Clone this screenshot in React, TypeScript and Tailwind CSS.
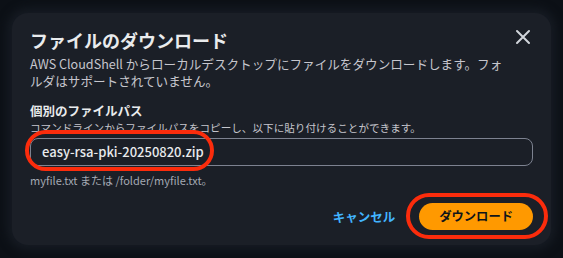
import React from "react";

export default function App() {
  const font = { fontFamily: '"Noto Sans CJK JP", "Noto Sans", sans-serif' };
  return (
    <div
      className="relative w-[563px] h-[258px] overflow-hidden bg-[#0c1016] pt-[13px] pl-[12px]"
      style={font}
    >
      <div className="relative w-[539px] h-[232px] rounded-[16px] bg-[#1b1f27] shadow-[0_0_10px_5px_#161b23] px-[18px] pt-[15px]">
        <div className="flex items-start justify-between">
          <h1 className="text-[18px] leading-[24px] font-bold text-[#e9ebed]">
            ファイルのダウンロード
          </h1>
          <button className="mt-[1px] mr-[2px] text-[#d1d5db]" aria-label="close">
            <svg width="16" height="16" viewBox="0 0 16 16" fill="none">
              <path d="M2 2 L14 14 M14 2 L2 14" stroke="currentColor" strokeWidth="2" strokeLinecap="round" />
            </svg>
          </button>
        </div>
        <p className="mt-[3px] w-[474px] text-[12.6px] leading-[17px] text-[#c6c6cd]">
          AWS CloudShell からローカルデスクトップにファイルをダウンロードします。フォルダはサポートされていません。
        </p>
        <div className="mt-[13px] text-[12.5px] leading-[17px] font-bold text-[#e9ebed]">
          個別のファイルパス
        </div>
        <div className="mt-[1px] text-[10.6px] leading-[15px] text-[#c6c6cd]">
          コマンドラインからファイルパスをコピーし、以下に貼り付けることができます。
        </div>
        <div className="mt-[3px] h-[28px] rounded-[8px] border border-[#7d8290] flex items-center pl-[11px] text-[13px] font-medium text-[#e9ebed]">
          easy-rsa-pki-20250820.zip
        </div>
        <div className="mt-[7px] text-[11px] leading-[14px] text-[#a4a9b3]">
          myfile.txt または /folder/myfile.txt。
        </div>
        <div className="mt-[16px] flex items-center justify-end gap-[24px]">
          <button className="text-[12.5px] leading-[17px] font-bold text-[#42b4ff]">
            キャンセル
          </button>
          <button className="h-[27px] px-[20px] rounded-full bg-[#ff9900] text-[12.3px] font-bold text-[#0f141a]">
            ダウンロード
          </button>
        </div>
      </div>
      <div className="absolute left-[25px] top-[130px] w-[189px] h-[41px] rounded-full border-[4px] border-[#fb2c0c]" />
      <div className="absolute left-[406px] top-[193px] w-[142px] h-[46px] rounded-full border-[4px] border-[#fb2c0c]" />
    </div>
  );
}
